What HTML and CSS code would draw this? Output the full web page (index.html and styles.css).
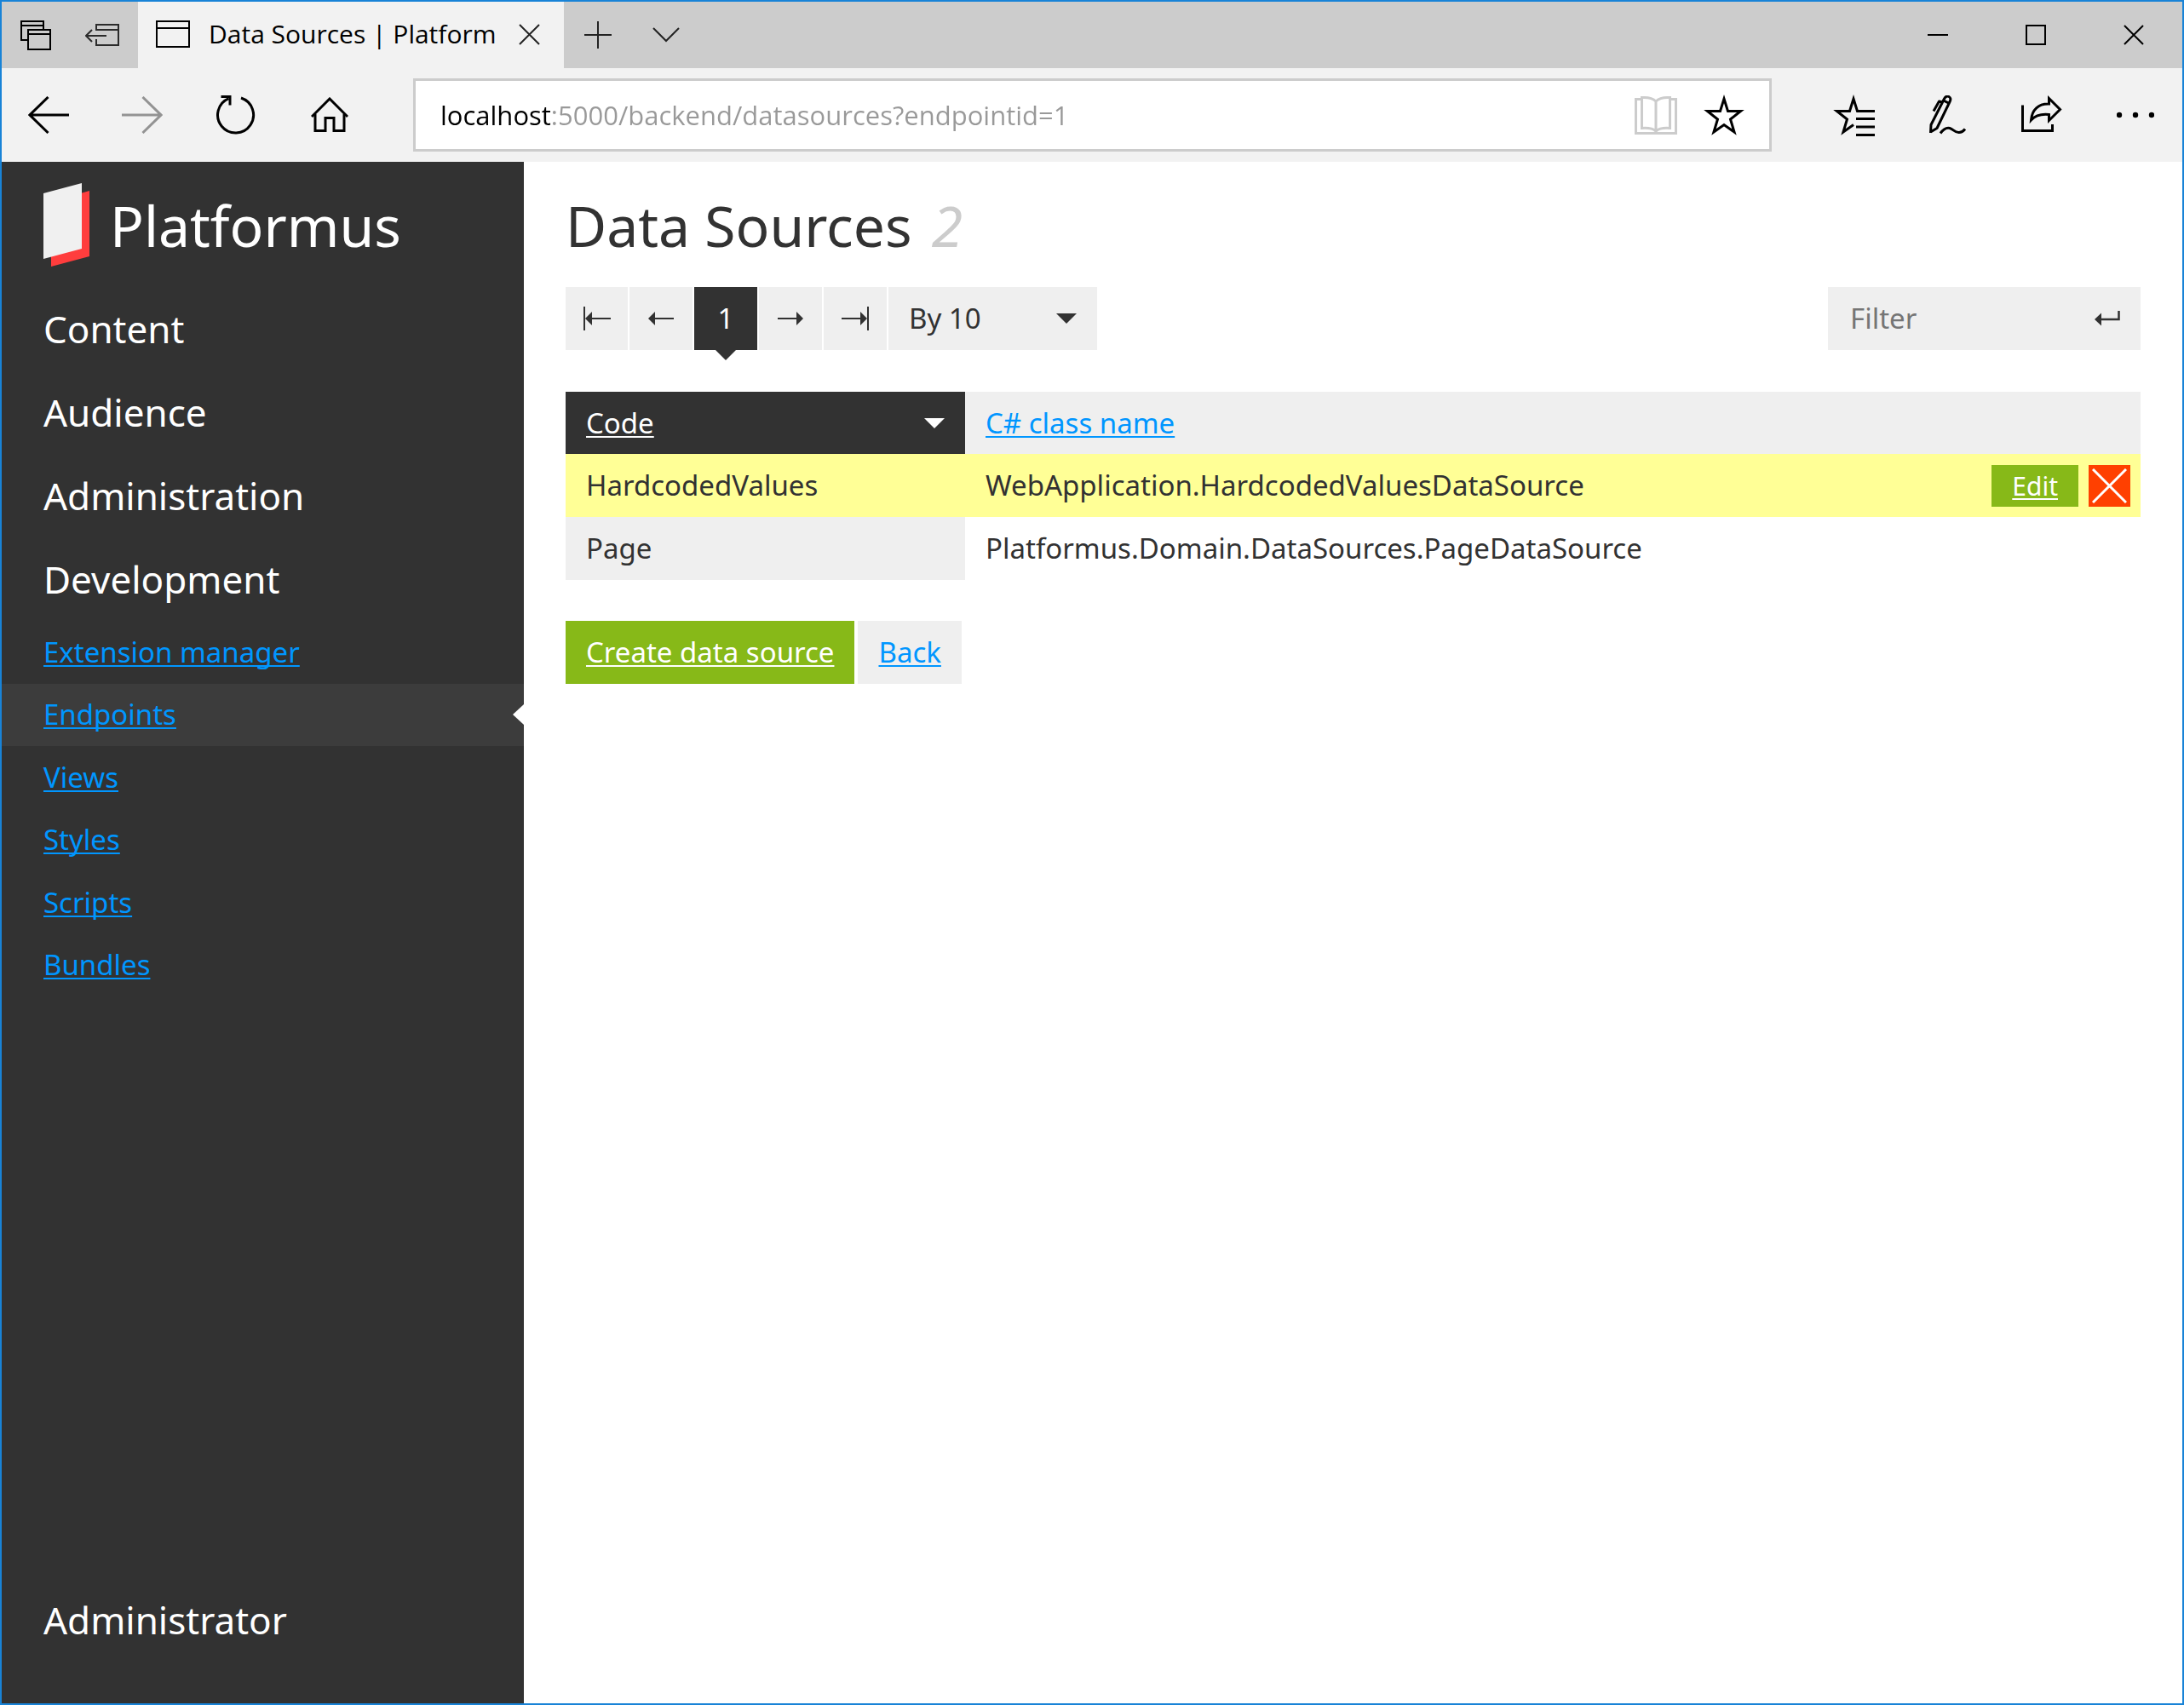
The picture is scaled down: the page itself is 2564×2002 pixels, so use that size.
FILE: index.html
```html
<!DOCTYPE html>
<html lang="en">
<head>
<meta charset="utf-8">
<title>Data Sources | Platformus</title>
<link rel="stylesheet" href="styles.css">
</head>
<body>
<div class="window">
  <header class="chrome">
    <div class="tabbar">
      <button class="strip-button" type="button" aria-label="Tabs you've set aside">
        <svg width="36" height="36" viewBox="0 0 36 36" fill="none" stroke="#000" stroke-width="2"><path d="M8 24H1V2H27V11M1 7H27"/><path d="M9 12H35V35H9ZM9 17H35"/></svg>
      </button>
      <button class="strip-button" type="button" aria-label="Set these tabs aside">
        <svg width="44" height="28" viewBox="0 0 44 28" fill="none" stroke="#2b2b2b" stroke-width="2"><path d="M13 9V2H39V26H13V19M13 8H39M1 15H25M8 8L1 15L8 22"/></svg>
      </button>
      <div class="tab">
        <svg width="40" height="34" viewBox="0 0 40 34" fill="none" stroke="#000" stroke-width="2"><path d="M1 2H39V32H1ZM1 10H39"/></svg>
        <span class="tab-title">Data Sources | Platform</span>
        <button class="tab-close" type="button" aria-label="Close tab">
          <svg width="25" height="25" viewBox="0 0 25 25" fill="none" stroke="#222" stroke-width="2"><path d="M1 1L24 24M24 1L1 24"/></svg>
        </button>
      </div>
      <button class="strip-button" type="button" aria-label="New tab">
        <svg width="32" height="32" viewBox="0 0 32 32" fill="none" stroke="#222" stroke-width="2"><path d="M0 16H32M16 0V32"/></svg>
      </button>
      <button class="strip-button" type="button" aria-label="Show tab previews">
        <svg width="32" height="18" viewBox="0 0 32 18" fill="none" stroke="#222" stroke-width="2"><path d="M1 1L16 16L31 1"/></svg>
      </button>
      <div class="window-controls">
        <button class="window-button" type="button" aria-label="Minimize">
          <svg width="24" height="24" viewBox="0 0 24 24" fill="none" stroke="#000" stroke-width="2"><path d="M0 12H24"/></svg>
        </button>
        <button class="window-button" type="button" aria-label="Maximize">
          <svg width="24" height="24" viewBox="0 0 24 24" fill="none" stroke="#000" stroke-width="2"><path d="M1 1H23V23H1Z"/></svg>
        </button>
        <button class="window-button" type="button" aria-label="Close">
          <svg width="24" height="24" viewBox="0 0 24 24" fill="none" stroke="#000" stroke-width="2"><path d="M1 1L23 23M23 1L1 23"/></svg>
        </button>
      </div>
    </div>
    <div class="toolbar">
      <button class="tool-button" type="button" aria-label="Back">
        <svg width="48" height="44" viewBox="0 0 48 44" fill="none" stroke="#000" stroke-width="3"><path d="M23.500 1L2 22L23.500 43M1 22H48"/></svg>
      </button>
      <button class="tool-button" type="button" aria-label="Forward" disabled>
        <svg width="48" height="44" viewBox="0 0 48 44" fill="none" stroke="#939393" stroke-width="3"><path d="M24.500 1L46 22L24.500 43M0 22H47"/></svg>
      </button>
      <button class="tool-button" type="button" aria-label="Refresh">
        <svg width="48" height="48" viewBox="0 0 48 48" fill="none" stroke="#000" stroke-width="3"><path d="M30 4A21 21 0 1 1 15.500 4.600"/><path d="M6.500 2.500H17V12.500"/></svg>
      </button>
      <button class="tool-button" type="button" aria-label="Home">
        <svg width="44" height="42" viewBox="0 0 44 42" fill="none" stroke="#000" stroke-width="3"><path d="M1 23L22 2L43 23"/><path d="M5 20V39.500H17V24.500H27V39.500H39V20"/></svg>
      </button>
      <div class="address">
        <input class="address-input" type="text" aria-label="Address" value="localhost:5000/backend/datasources?endpointid=1">
        <button class="address-button" type="button" aria-label="Reading view">
          <svg width="50" height="46" viewBox="0 0 50 46" fill="none" stroke="#ccc" stroke-width="3"><path d="M8 4.500H1.500V44.500H48.500V4.500H42"/><path d="M25 7C21 3 15 2 8.500 2.500V38.500C15 38 21 38.500 25 42C29 38.500 35 38 41.500 38.500V2.500C35 2 29 3 25 7ZM25 7V42"/></svg>
        </button>
        <button class="address-button" type="button" aria-label="Add to favorites">
          <svg width="48" height="50" viewBox="0 0 48 50" fill="none" stroke="#000" stroke-width="3" stroke-miterlimit="10"><path d="M24 6L28.500 20.500H43.500L31.500 30L36 45L24 36.500L12 45L16.500 30L4.500 20.500H19.500Z"/></svg>
        </button>
      </div>
      <button class="tool-button" type="button" aria-label="Hub">
        <svg width="50" height="50" viewBox="0 0 50 50" fill="none" stroke="#000" stroke-width="3" stroke-miterlimit="10"><path d="M24 36.500L12 45L16.500 30L4.500 20.500H19.500L24 6L28.500 20.500H49M27 29.500H49M27 39H49M27 48.500H49"/></svg>
      </button>
      <button class="tool-button" type="button" aria-label="Add notes">
        <svg width="44" height="46" viewBox="0 0 44 46" fill="none" stroke="#000" stroke-width="3" stroke-linejoin="round"><path d="M1.500 44L2 34.500L17.500 4C19 1 21 .5 23 1.500C25 2.500 25.500 4.500 24 7.500L9 38.500L1.500 43"/><path d="M16.500 6L23.500 9.500M5 18.500L11.500 7L15.500 8"/><path d="M13 44.500C17 39 20 37.500 24 38.500C28 39.500 30 44 35 43.500C38 43.500 40 42 42 39.500"/></svg>
      </button>
      <button class="tool-button" type="button" aria-label="Share">
        <svg width="48" height="48" viewBox="0 0 48 48" fill="none" stroke="#000" stroke-width="3" stroke-miterlimit="10"><path d="M1.500 12.500V42.500H36.500V35"/><path d="M32.500 4.500L45.500 17.500L32.500 30.500V23.500C23 22.500 17 24 11.500 30C12.500 18 20 10.500 32.500 11Z"/></svg>
      </button>
      <button class="tool-button" type="button" aria-label="More">
        <svg width="44" height="8" viewBox="0 0 44 8"><circle cx="3" cy="4" r="3.200"/><circle cx="22" cy="4" r="3.200"/><circle cx="41" cy="4" r="3.200"/></svg>
      </button>
    </div>
  </header>

  <div class="app">
    <aside class="sidebar">
      <a class="brand" href="#">
        <svg width="54" height="98" viewBox="0 0 54 98"><path fill="#ff3d3d" d="M9 22L54 9V86L9 98Z"/><path fill="#f0f0f0" d="M0 12L45 0V77L0 89Z"/></svg>
        <span>Platformus</span>
      </a>
      <nav class="menu" aria-label="Main">
        <a class="menu-group" href="#">Content</a>
        <a class="menu-group" href="#">Audience</a>
        <a class="menu-group" href="#">Administration</a>
        <a class="menu-group" href="#">Development</a>
        <ul class="submenu">
          <li><a class="link" href="#">Extension manager</a></li>
          <li class="active"><a class="link" href="#" aria-current="page">Endpoints</a></li>
          <li><a class="link" href="#">Views</a></li>
          <li><a class="link" href="#">Styles</a></li>
          <li><a class="link" href="#">Scripts</a></li>
          <li><a class="link" href="#">Bundles</a></li>
        </ul>
      </nav>
      <a class="menu-group account" href="#">Administrator</a>
    </aside>

    <main class="content">
      <h1 class="title">Data Sources <em class="count">2</em></h1>

      <div class="controls">
        <nav class="pager" aria-label="Pages">
          <a class="page" href="#" aria-label="First page"><svg width="32" height="28" viewBox="0 0 32 28"><path fill="none" stroke="#323232" stroke-width="2" d="M1 0V28M8 14H32"/><path fill="#323232" d="M2 14L10 6V22Z"/></svg></a>
          <a class="page" href="#" aria-label="Previous page"><svg width="30" height="28" viewBox="0 0 30 28"><path stroke="#323232" stroke-width="2" d="M6 14H30"/><path fill="#323232" d="M0 14L8 6V22Z"/></svg></a>
          <a class="page current" href="#" aria-current="page">1</a>
          <a class="page" href="#" aria-label="Next page"><svg width="30" height="28" viewBox="0 0 30 28"><path stroke="#323232" stroke-width="2" d="M0 14H24"/><path fill="#323232" d="M30 14L22 6V22Z"/></svg></a>
          <a class="page" href="#" aria-label="Last page"><svg width="32" height="28" viewBox="0 0 32 28"><path fill="none" stroke="#323232" stroke-width="2" d="M31 0V28M0 14H24"/><path fill="#323232" d="M30 14L22 6V22Z"/></svg></a>
          <div class="page-size">
            <select class="page-size-select" aria-label="Items per page"><option>By 10</option><option>By 25</option><option>By 50</option></select>
            <svg class="page-size-arrow" width="24" height="12" viewBox="0 0 24 12"><path fill="#323232" d="M0 0H24L12 12Z"/></svg>
          </div>
        </nav>
        <form class="filter">
          <input class="filter-input" type="text" placeholder="Filter" aria-label="Filter">
          <button class="filter-submit" type="button" aria-label="Apply filter"><svg width="30" height="18" viewBox="0 0 30 18"><path fill="none" stroke="#323232" stroke-width="2.500" d="M6 10H28.500V0"/><path fill="#323232" d="M0 10L8 2.500V17.500Z"/></svg></button>
        </form>
      </div>

      <table class="grid">
        <colgroup><col class="col-code"><col><col class="col-actions"></colgroup>
        <thead>
          <tr>
            <th class="sorted" scope="col"><div class="sort"><a class="link" href="#">Code</a><svg width="24" height="12" viewBox="0 0 24 12"><path fill="#fff" d="M0 0H24L12 12Z"/></svg></div></th>
            <th scope="col"><a class="link" href="#">C# class name</a></th>
            <th></th>
          </tr>
        </thead>
        <tbody>
          <tr class="highlight">
            <td>HardcodedValues</td>
            <td>WebApplication.HardcodedValuesDataSource</td>
            <td class="actions">
              <div class="action-list">
                <a class="edit" href="#">Edit</a>
                <button class="delete" type="button" aria-label="Delete"><svg width="41" height="41" viewBox="0 0 41 41" fill="none" stroke="#fff" stroke-width="3"><path d="M1 1L40 40M40 1L1 40"/></svg></button>
              </div>
            </td>
          </tr>
          <tr>
            <td>Page</td>
            <td>Platformus.Domain.DataSources.PageDataSource</td>
            <td class="actions"></td>
          </tr>
        </tbody>
      </table>

      <div class="buttons">
        <a class="button primary" href="#">Create data source</a>
        <a class="button" href="#">Back</a>
      </div>
    </main>
  </div>
</div>
</body>
</html>
```
FILE: styles.css
```css
*, *::before, *::after { box-sizing: border-box; }

body {
  margin: 0;
  background: #fff;
  color: #323232;
  font-family: "Noto Sans", "Open Sans", sans-serif;
  font-size: 33px;
  line-height: 44px;
}

button {
  display: flex;
  align-items: center;
  justify-content: center;
  padding: 0;
  border: 0;
  background: none;
  font: inherit;
}

svg { display: block; flex: none; }

a {
  color: inherit;
  text-decoration-thickness: 2px;
  text-underline-offset: 3px;
  text-decoration-skip-ink: none;
}

.window {
  display: flex;
  flex-direction: column;
  min-height: 100vh;
  border: 2px solid #1883d7;
}

/* Browser chrome */
.chrome { font-family: "Open Sans", "Noto Sans", sans-serif; color: #000; }

.tabbar { display: flex; height: 78px; padding-bottom: 1px; background: linear-gradient(#ccc, #ccc); }
.strip-button { width: 80px; }

.tab {
  display: flex;
  align-items: center;
  width: 500px;
  height: 78px;
  padding: 0 28px 2px 21px;
  background: #f2f2f2;
}
.tab-title { flex: 1; padding-left: 22px; font-size: 30px; white-space: nowrap; }

.window-controls { display: flex; margin-left: auto; }
.window-button { width: 115px; }

.toolbar {
  display: flex;
  align-items: stretch;
  height: 110px;
  padding: 12px 0;
  background: #f2f2f2;
}
.tool-button { flex: none; width: 110px; }

.address {
  display: flex;
  flex: 1;
  min-width: 0;
  margin: 0 42px 0 43px;
  padding-right: 13px;
  border: 3px solid #ccc;
  background: #fff;
}
.address-input {
  flex: 1;
  min-width: 0;
  padding: 0 0 0 29px;
  border: 0;
  /* the host is dark, the rest of the address is dimmed */
  background: linear-gradient(to right, #000 159px, #999 159px);
  background-clip: text;
  -webkit-background-clip: text;
  color: transparent;
  font: inherit;
  font-size: 31px;
}
.address-button { flex: none; width: 80px; }

/* Application */
.app { display: flex; flex: 1; }

.sidebar {
  display: flex;
  flex-direction: column;
  flex: none;
  width: 613px;
  padding-bottom: 49px;
  background: #323232;
  color: #fff;
}

.brand {
  display: flex;
  align-items: center;
  gap: 24px;
  height: 147px;
  padding-left: 49px;
  font-size: 66px;
  line-height: 88px;
  text-decoration: none;
}

.menu-group {
  display: flex;
  align-items: center;
  height: 98px;
  padding-left: 49px;
  font-size: 44px;
  text-decoration: none;
}
.account { margin-top: auto; }

.submenu {
  display: grid;
  grid-auto-rows: 1fr;
  height: 441px;
  margin: 0;
  padding: 0;
  list-style: none;
}
.submenu li {
  display: flex;
  align-items: center;
  padding-left: 49px;
}
.submenu .active { position: relative; background: #3c3c3c; }
.submenu .active::after {
  content: "";
  position: absolute;
  top: 50%;
  right: 0;
  margin-top: -12px;
  border: 12px solid transparent;
  border-left-width: 0;
  border-right: 13px solid #fff;
}

.link { color: #0096ff; }

.content { flex: 1; min-width: 0; padding: 30px 49px 49px; }

.title {
  margin: 0 0 29px;
  font-size: 66px;
  font-weight: 400;
  line-height: 88px;
}
.count { margin-left: 6px; color: #ccc; }

.controls { display: flex; justify-content: space-between; margin-bottom: 49px; }

.pager { display: flex; gap: 2px; }
.page {
  display: flex;
  align-items: center;
  justify-content: center;
  width: 74px;
  height: 74px;
  background: #efefef;
  text-decoration: none;
}
.page:first-child { width: 73px; }
.page.current { position: relative; background: #323232; color: #fff; }
.page.current::after {
  content: "";
  position: absolute;
  top: 100%;
  left: 50%;
  margin-left: -12px;
  border: 12px solid transparent;
  border-bottom-width: 0;
  border-top-color: #323232;
}

.page-size { display: grid; width: 245px; }
.page-size-select {
  grid-area: 1 / 1;
  appearance: none;
  padding: 0 24px;
  border: 0;
  border-radius: 0;
  background: #efefef;
  color: inherit;
  font: inherit;
}
.page-size-arrow {
  grid-area: 1 / 1;
  align-self: center;
  justify-self: end;
  margin-right: 24px;
  pointer-events: none;
}

.filter { display: flex; width: 367px; background: #efefef; }
.filter-input {
  flex: 1;
  min-width: 0;
  padding: 0 0 0 26px;
  border: 0;
  background: none;
  color: inherit;
  font: inherit;
}
.filter-input::placeholder { color: #757575; opacity: 1; }
.filter-submit { width: 78px; }

.grid { width: 100%; border-collapse: collapse; table-layout: fixed; }
.col-code { width: 469px; }
.col-actions { width: 220px; }
.grid th, .grid td { height: 74px; padding: 0 24px; text-align: left; font-weight: 400; }
.grid th { height: 73px; background: #efefef; }
.grid th.sorted { background: #323232; }
.sorted .link { color: #fff; }
.sort { display: flex; align-items: center; justify-content: space-between; }
.grid td:first-child { background: #efefef; }
.grid .highlight td { background: #ffff96; }
.grid td.actions { padding: 0 12px 0 0; }

.action-list { display: flex; justify-content: flex-end; gap: 12px; }
.edit {
  padding: 0 24px;
  background: #87b918;
  color: #fff;
  font-size: 30px;
  line-height: 49px;
}
.delete { width: 49px; height: 49px; background: #ff4000; }

.buttons { display: flex; gap: 4px; margin-top: 48px; }
.button {
  padding: 0 24px;
  background: #efefef;
  color: #0096ff;
  line-height: 74px;
}
.button.primary { background: #87b918; color: #fff; }
```
